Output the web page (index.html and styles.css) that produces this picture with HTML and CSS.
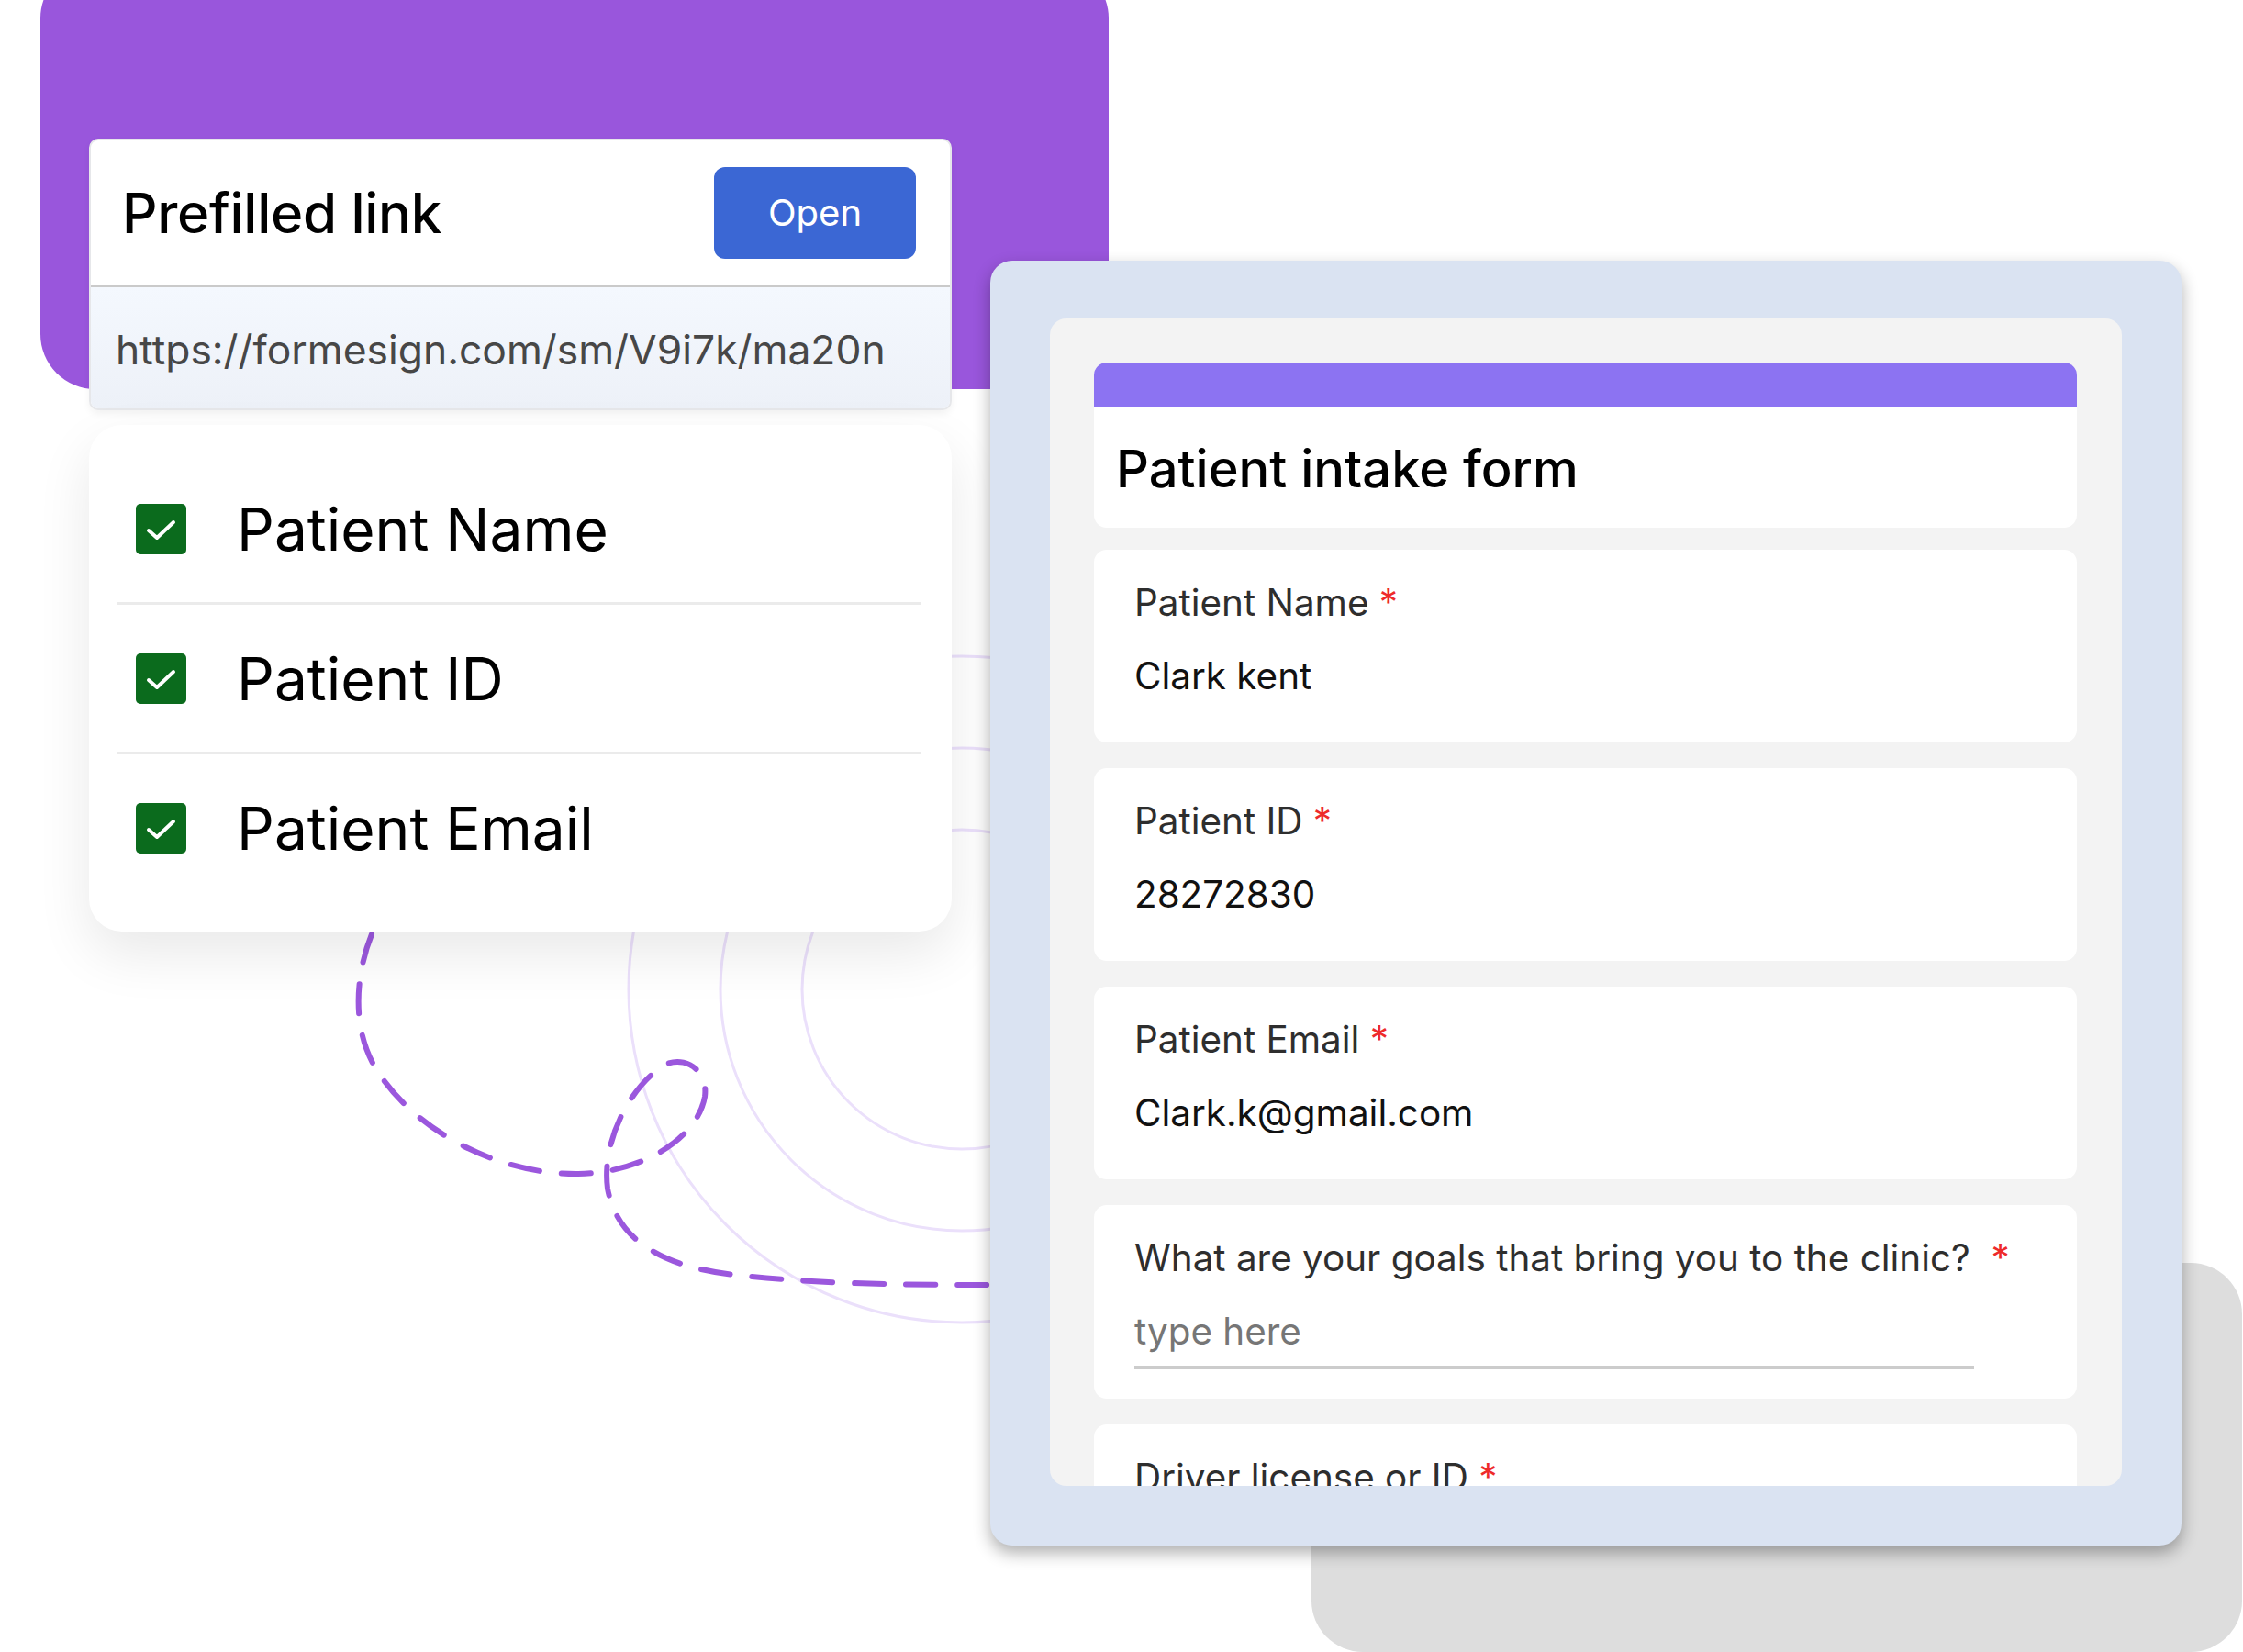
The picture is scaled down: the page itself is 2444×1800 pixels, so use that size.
FILE: index.html
```html
<!DOCTYPE html>
<html lang="en">
<head>
    <meta charset="UTF-8">
    <meta name="viewport" content="width=device-width, initial-scale=1.0">
    <title>Prefilled link</title>
    <link rel="stylesheet" href="styles.css">
</head>
<body>
    <div class="scene">
        <div class="blob blob-purple"></div>
        <div class="blob blob-gray"></div>

        <!-- 背景装饰：同心圆 + 虚线 -->
        <svg class="decor" width="2444" height="1800" viewBox="0 0 2444 1800">
            <g fill="none" stroke="#ebe0fb" stroke-width="3">
                <circle cx="1048" cy="1078" r="174"/>
                <circle cx="1048" cy="1078" r="263"/>
                <circle cx="1048" cy="1078" r="363"/>
            </g>
            <path d="M405 1018 C388 1060 382 1120 410 1165 C450 1230 540 1280 630 1279 C700 1278 760 1240 768 1195 C772 1165 745 1150 725 1160 C690 1180 655 1240 662 1295 C672 1350 720 1380 800 1389 C880 1398 960 1400 1085 1400"
                  fill="none" stroke="#9b57dd" stroke-width="6" stroke-linecap="round" stroke-dasharray="32 24"/>
        </svg>

        <div class="link-card">
            <div class="link-head">
                <h2>Prefilled link</h2>
                <a href="#" class="btn-open">Open</a>
            </div>
            <div class="link-url">https://formesign.com/sm/V9i7k/ma20n</div>
        </div>

        <ul class="check-card">
            <li class="check-row">
                <span class="checkbox"><svg viewBox="0 0 55 55" width="55" height="55"><path d="M14 29 L23 37 L41 20" fill="none" stroke="#fff" stroke-width="4" stroke-linecap="round" stroke-linejoin="round"/></svg></span>
                <span>Patient Name</span>
            </li>
            <li class="check-row">
                <span class="checkbox"><svg viewBox="0 0 55 55" width="55" height="55"><path d="M14 29 L23 37 L41 20" fill="none" stroke="#fff" stroke-width="4" stroke-linecap="round" stroke-linejoin="round"/></svg></span>
                <span>Patient ID</span>
            </li>
            <li class="check-row">
                <span class="checkbox"><svg viewBox="0 0 55 55" width="55" height="55"><path d="M14 29 L23 37 L41 20" fill="none" stroke="#fff" stroke-width="4" stroke-linecap="round" stroke-linejoin="round"/></svg></span>
                <span>Patient Email</span>
            </li>
        </ul>

        <div class="form-frame">
            <div class="form-panel">
                <div class="form-head">
                    <div class="form-bar"></div>
                    <h1>Patient intake form</h1>
                </div>
                <div class="fields">
                    <div class="field">
                        <div class="label">Patient Name <span class="req">*</span></div>
                        <div class="value">Clark kent</div>
                    </div>
                    <div class="field">
                        <div class="label">Patient ID <span class="req">*</span></div>
                        <div class="value">28272830</div>
                    </div>
                    <div class="field">
                        <div class="label">Patient Email <span class="req">*</span></div>
                        <div class="value">Clark.k@gmail.com</div>
                    </div>
                    <div class="field">
                        <div class="label">What are your goals that bring you to the clinic? &nbsp;<span class="req">*</span></div>
                        <div class="input">type here</div>
                    </div>
                    <div class="field">
                        <div class="label">Driver license or ID <span class="req">*</span></div>
                    </div>
                </div>
            </div>
        </div>
    </div>
</body>
</html>
```

FILE: styles.css
```css
/**
重置
*/
html, body {
    margin: 0;
    padding: 0;
    background: #ffffff;
}
ul, ul li {
    list-style: none;
    margin: 0;
    padding: 0;
}
h1, h2 {
    margin: 0;
}
a {
    text-decoration: none;
}
body {
    font-family: Inter, "Noto Sans", sans-serif;
    color: #000;
}
/**
画布
*/
.scene {
    position: relative;
    width: 2444px;
    height: 1800px;
    overflow: hidden;
}
.blob {
    position: absolute;
}
.blob-purple {
    left: 44px;
    top: -40px;
    width: 1164px;
    height: 464px;
    border-radius: 60px;
    background: #9956dc;
}
.blob-gray {
    left: 1429px;
    top: 1376px;
    width: 1014px;
    height: 424px;
    border-radius: 56px;
    background: #dddddd;
}
.decor {
    position: absolute;
    left: 0;
    top: 0;
}
/**
链接卡片
*/
.link-card {
    position: absolute;
    left: 97px;
    top: 151px;
    width: 940px;
    height: 296px;
    box-sizing: border-box;
    border: 2px solid #e6e7ea;
    border-radius: 10px;
    background: #fff;
    overflow: hidden;
    display: flex;
    flex-direction: column;
    box-shadow: 0 4px 8px rgba(0, 0, 0, 0.05);
}
.link-head {
    height: 157px;
    display: flex;
    align-items: center;
    justify-content: space-between;
    padding: 0 37px 0 34px;
    border-bottom: 3px solid #cacaca;
}
.link-head h2 {
    font-size: 60px;
    font-weight: 500;
    letter-spacing: -0.3px;
    color: #000;
}
.btn-open {
    width: 220px;
    height: 100px;
    border-radius: 12px;
    background: #3b67d4;
    color: #fff;
    font-size: 40px;
    display: flex;
    align-items: center;
    justify-content: center;
}
.link-url {
    flex: 1;
    display: flex;
    align-items: center;
    padding: 4px 0 0 27px;
    background: linear-gradient(#f4f8fe, #edf1f8);
    font-size: 44.4px;
    color: #474747;
}
/**
勾选列表
*/
.check-card {
    position: absolute;
    left: 97px;
    top: 463px;
    width: 940px;
    height: 552px;
    box-sizing: border-box;
    padding: 33px 34px 33px 31px;
    border-radius: 36px;
    background: #fff;
    box-shadow: 0 24px 60px rgba(0, 0, 0, 0.09);
}
.check-card .check-row {
    height: 160px;
    display: flex;
    align-items: center;
    gap: 55px;
    padding-left: 20px;
    border-bottom: 3px solid #ebebeb;
    font-size: 64px;
    color: #000;
}
.check-card .check-row:last-child {
    border-bottom: 0;
}
.checkbox {
    width: 55px;
    height: 55px;
    border-radius: 5px;
    background: #0b6b1d;
    display: block;
}
.checkbox svg {
    display: block;
}
/**
表单
*/
.form-frame {
    position: absolute;
    left: 1079px;
    top: 284px;
    width: 1298px;
    height: 1400px;
    box-sizing: border-box;
    padding: 63px 65px 65px 65px;
    border-radius: 24px;
    background: #dae3f2;
    box-shadow: 0 8px 18px rgba(0, 0, 0, 0.32);
}
.form-panel {
    height: 100%;
    box-sizing: border-box;
    padding: 48px 49px 0 48px;
    border-radius: 18px;
    background: #f3f3f3;
    overflow: hidden;
}
.form-head {
    background: #fff;
    border-radius: 14px;
    overflow: hidden;
}
.form-bar {
    height: 49px;
    background: #8c73f2;
}
.form-head h1 {
    padding: 34px 24px 30px;
    font-size: 56px;
    font-weight: 500;
    line-height: 67px;
    color: #000;
}
.fields {
    margin-top: 24px;
    display: flex;
    flex-direction: column;
    gap: 28px;
}
.field {
    background: #fff;
    border-radius: 14px;
    padding: 34px 44px 48px;
    font-size: 40.4px;
    line-height: 48px;
}
.field .label {
    color: #2e2e2e;
}
.field .req {
    color: #ee2a2a;
}
.field .value {
    margin-top: 32px;
    color: #111;
}
.field .input {
    width: 915px;
    margin-top: 32px;
    margin-bottom: -16px;
    padding-bottom: 13px;
    border-bottom: 4px solid #cccccc;
    color: #767676;
}
```
